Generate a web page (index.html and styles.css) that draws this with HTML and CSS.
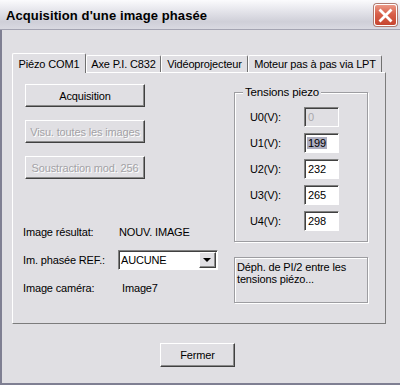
FILE: index.html
```html
<!DOCTYPE html>
<html lang="fr">
<head>
<meta charset="utf-8">
<title>Acquisition d'une image phasée</title>
<link rel="stylesheet" href="styles.css">
</head>
<body>
<div class="window">
  <div class="titlebar">
    <span class="title">Acquisition d'une image phasée</span>
    <div class="close">
      <svg width="15" height="15" viewBox="0 0 15 15"><path d="M2.5 2.5 L12.5 12.5 M12.5 2.5 L2.5 12.5" stroke="#fff" stroke-width="2.8" stroke-linecap="square"/></svg>
    </div>
  </div>
  <div class="client">
    <div class="tabs">
      <div class="tab active w1">Piézo COM1</div>
      <div class="tab w2">Axe P.I. C832</div>
      <div class="tab w3">Vidéoprojecteur</div>
      <div class="tab w4">Moteur pas à pas via LPT</div>
    </div>
    <div class="panel">
      <div class="left">
        <div class="btn big">Acquisition</div>
        <div class="btn big disabled">Visu. toutes les images</div>
        <div class="btn big disabled">Soustraction mod. 256</div>
        <div class="rows">
          <div class="row"><span class="lbl">Image résultat:</span><span class="val">NOUV. IMAGE</span></div>
          <div class="row"><span class="lbl">Im. phasée REF.:</span>
            <div class="combo"><span class="combo-text">AUCUNE</span><span class="arrow"><span class="tri"></span></span></div>
          </div>
          <div class="row"><span class="lbl">Image caméra:</span><span class="val v3">Image7</span></div>
        </div>
      </div>
      <div class="right">
        <fieldset class="group">
          <legend>Tensions piezo</legend>
          <div class="urow"><span class="ulbl">U0(V):</span><div class="field off">0</div></div>
          <div class="urow"><span class="ulbl">U1(V):</span><div class="field"><span class="sel">199</span></div></div>
          <div class="urow"><span class="ulbl">U2(V):</span><div class="field">232</div></div>
          <div class="urow"><span class="ulbl">U3(V):</span><div class="field">265</div></div>
          <div class="urow"><span class="ulbl">U4(V):</span><div class="field">298</div></div>
        </fieldset>
        <div class="note">Déph. de PI/2 entre les tensions piézo...</div>
      </div>
    </div>
    <div class="footer"><div class="btn fermer">Fermer</div></div>
  </div>
</div>
</body>
</html>
```
FILE: styles.css
```css
* { box-sizing: border-box; }
html, body { margin: 0; padding: 0; }
body {
  font-family: "Liberation Sans", Arial, sans-serif;
  font-size: 11px;
  letter-spacing: -0.15px;
  color: #000;
  background: #e0dfe3;
}
.window {
  width: 400px;
  height: 385px;
  background: #e0dfe3;
  display: flex;
  flex-direction: column;
}
.titlebar {
  height: 30px;
  flex: none;
  display: flex;
  align-items: center;
  justify-content: space-between;
  padding: 1px 3px 0 6px;
  background: linear-gradient(to bottom, #fbfbfd 0%, #e6e6ec 35%, #cfcfd8 75%, #d9d9e1 100%);
  border-bottom: 1px solid #a4a4b2;
}
.title {
  font-weight: bold;
  font-size: 13px;
  letter-spacing: 0.1px;
}
.close {
  width: 23px;
  height: 22px;
  border-radius: 3px;
  border: 1px solid #fff;
  box-shadow: 0 0 0 1px #b07a70;
  background: linear-gradient(to bottom, #eb9886 0%, #d8604a 45%, #c64530 100%);
  display: flex;
  align-items: center;
  justify-content: center;
}
.client {
  flex: 1;
  border-left: 2px solid #7f7f92;
  border-bottom: 2px solid #7f7f92;
  padding: 23px 14px 0 10px;
  display: flex;
  flex-direction: column;
}
.tabs {
  display: flex;
  align-items: flex-end;
  height: 19px;
}
.tab {
  height: 17px;
  border-top: 1px solid #fff;
  border-left: 1px solid #fff;
  border-right: 1px solid #707070;
  border-radius: 2px 2px 0 0;
  display: flex;
  align-items: center;
  justify-content: center;
  white-space: nowrap;
  background: #e0dfe3;
}
.tab.active {
  height: 20px;
  margin-bottom: -1px;
  position: relative;
  z-index: 1;
}
.w1 { width: 74px; }
.w2 { width: 75px; }
.w3 { width: 87px; }
.w4 { width: 134px; }
.panel {
  height: 252px;
  border: 1px solid;
  border-color: #fff #7c7c7c #7c7c7c #fff;
  display: flex;
  justify-content: space-between;
  padding: 11px 17px 0 12px;
}
.left {
  display: flex;
  flex-direction: column;
  width: 200px;
}
.btn {
  border: 1px solid;
  border-color: #fff #404040 #404040 #fff;
  box-shadow: inset -1px -1px #8a8a8a;
  display: flex;
  align-items: center;
  justify-content: center;
  white-space: nowrap;
  background: #e0dfe3;
}
.big {
  width: 120px;
  height: 23px;
  margin-bottom: 13px;
}
.disabled {
  color: #a3a2a6;
  text-shadow: 1px 1px #fff;
}
.rows {
  margin-top: 26px;
  margin-left: -2px;
  display: flex;
  flex-direction: column;
}
.row {
  height: 28px;
  display: flex;
  align-items: center;
}
.lbl { width: 95px; }
.val { padding-left: 1px; }
.v3 { padding-left: 4px; }
.combo {
  width: 100px;
  height: 20px;
  background: #fff;
  border: 1px solid;
  border-color: #808080 #fff #fff #808080;
  box-shadow: inset 1px 1px #404040;
  display: flex;
  align-items: center;
  justify-content: space-between;
  padding: 1px 1px 1px 2px;
}
.arrow {
  width: 17px;
  height: 16px;
  background: #e0dfe3;
  border: 1px solid;
  border-color: #fff #404040 #404040 #fff;
  box-shadow: inset -1px -1px #8a8a8a;
  display: flex;
  align-items: center;
  justify-content: center;
}
.tri {
  width: 0;
  height: 0;
  border-left: 4px solid transparent;
  border-right: 4px solid transparent;
  border-top: 4px solid #000;
  margin-left: -1px;
}
.right {
  width: 134px;
  display: flex;
  flex-direction: column;
}
.group {
  margin: 2px 0 0 0;
  padding: 8px 0 10px 8px;
  border: 1px solid #9d9da1;
  box-shadow: inset 1px 1px #fff, 1px 1px #fff;
  display: flex;
  flex-direction: column;
  gap: 6px;
  min-width: 0;
}
.group legend {
  padding: 0 2px;
  line-height: 13px;
  background: #e0dfe3;
  font-size: 11.5px;
}
.urow {
  height: 20px;
  display: flex;
  align-items: center;
  padding-left: 7px;
}
.ulbl { width: 54px; }
.field {
  width: 35px;
  height: 20px;
  background: #fff;
  border: 1px solid;
  border-color: #808080 #fff #fff #808080;
  box-shadow: inset 1px 1px #404040;
  padding: 2px 0 0 3px;
  line-height: 14px;
}
.field.off {
  background: #e0dfe3;
  color: #a9a8ac;
}
.sel {
  background: #aeaebf;
  padding: 0 1px;
  margin-left: -1px;
}
.note {
  margin-top: 15px;
  height: 46px;
  border: 1px solid #9d9da1;
  box-shadow: 1px 1px #fff, inset 1px 1px #fff;
  padding: 3px 1px 0 2px;
  line-height: 12px;
}
.footer {
  display: flex;
  justify-content: center;
  padding-right: 3px;
  margin-top: 19px;
}
.fermer {
  width: 75px;
  height: 24px;
}
```
